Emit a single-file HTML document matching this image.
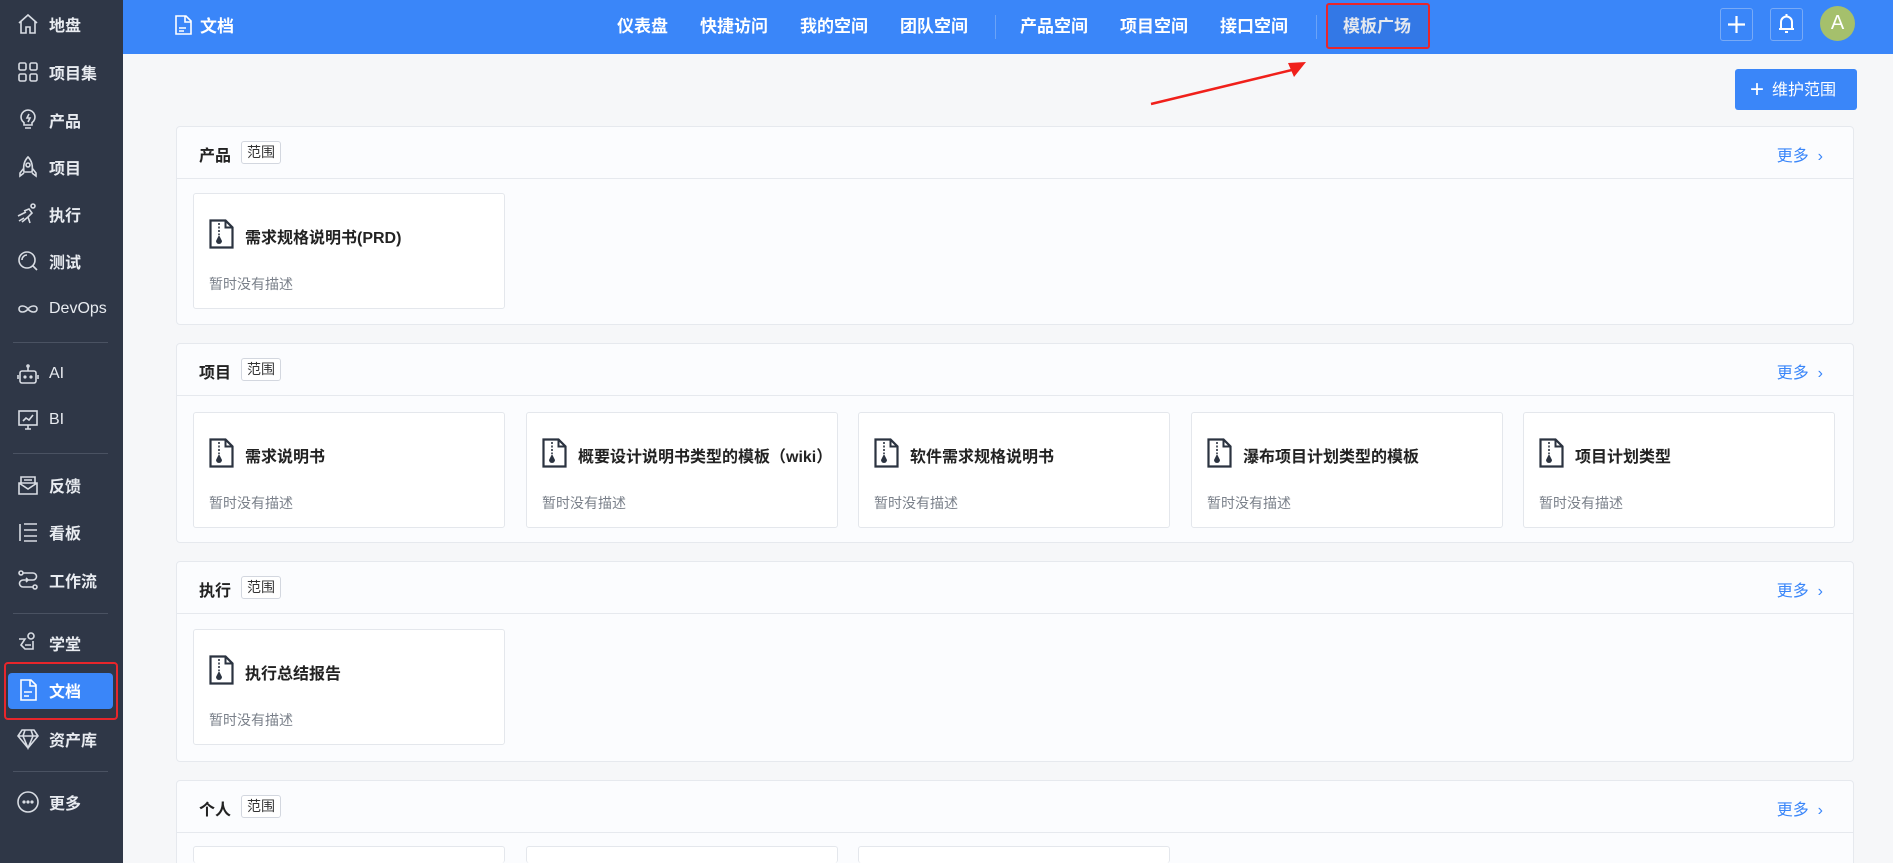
<!DOCTYPE html>
<html><head><meta charset="utf-8"><style>
*{box-sizing:border-box;margin:0;padding:0}
html,body{width:1893px;height:863px;overflow:hidden}
body{background:#f6f7f9;font-family:"Liberation Sans","Noto Sans CJK SC",sans-serif;position:relative}
.side{position:absolute;left:0;top:0;width:123px;height:863px;background:#2f3747}
.si{position:absolute;left:16px;height:30px;display:flex;align-items:center;color:#e8ebf0;font-size:16px;font-weight:bold}
.si svg{width:24px;height:24px;margin-right:9px;stroke:#d8dce3;fill:none;stroke-width:1.6}
.dv{position:absolute;left:13px;width:95px;height:1px;background:#4a5262}
.top{position:absolute;left:123px;top:0;width:1770px;height:54px;background:#3a86f9}
.nav{position:absolute;top:0;height:54px;line-height:54px;color:#fff;font-size:17px;font-weight:bold}
.sec{position:absolute;left:176px;width:1678px;background:#fbfcfe;border:1px solid #e6e9ee;border-radius:4px;overflow:hidden}
.sh{height:52px;border-bottom:1px solid #e6e9ee;position:relative}
.st{position:absolute;left:22px;top:15px;font-size:16px;font-weight:bold;color:#222}
.tag{position:absolute;left:64px;top:14px;border:1px solid #d3d7df;border-radius:3px;font-size:14px;padding:1px 5px;color:#333;background:#fff;line-height:19px}
.more{position:absolute;right:30px;top:15px;color:#3a86f9;font-size:16px}
.card{position:absolute;width:312px;height:116px;background:#fff;border:1px solid #e4e7ec;border-radius:3px}
.card .ic{position:absolute;left:15px;top:25px}
.card .t{position:absolute;left:51px;top:30px;font-size:16px;font-weight:bold;color:#222;white-space:nowrap;width:255px;overflow:hidden}
.card .d{position:absolute;left:15px;top:80px;font-size:14px;color:#7a808a}
</style></head><body>
<div class="side">
<div class="si" style="top:9px"><svg viewBox="0 0 24 24"><path d="M3 11 12 3l9 8M5 9v12h5v-6h4v6h5V9"/></svg>地盘</div>
<div class="si" style="top:57px"><svg viewBox="0 0 24 24"><rect x="3" y="3" width="7" height="7" rx="1.5"/><rect x="14" y="3" width="7" height="7" rx="1.5"/><rect x="3" y="14" width="7" height="7" rx="1.5"/><rect x="14" y="14" width="7" height="7" rx="1.5"/></svg>项目集</div>
<div class="si" style="top:105px"><svg viewBox="0 0 24 24"><path d="M12 2a7 7 0 0 0-4 12.7V17h8v-2.3A7 7 0 0 0 12 2zM9 20h6M13 6l-2 4h3l-2 4"/></svg>产品</div>
<div class="si" style="top:152px"><svg viewBox="0 0 24 24"><path d="M12 2c-4 4-5 9-4 15h8c1-6 0-11-4-15zM8 13l-4 5v3l4-3M16 13l4 5v3l-4-3"/><circle cx="12" cy="10" r="2"/></svg>项目</div>
<div class="si" style="top:199px"><svg viewBox="0 0 24 24"><circle cx="17" cy="4" r="2"/><path d="M8 9l5-2 3 4-4 4 2 6M12 15l-6 5M2 14l8-4M3 19l5-3"/></svg>执行</div>
<div class="si" style="top:246px"><svg viewBox="0 0 24 24"><circle cx="11" cy="11" r="8"/><path d="M17 17l4 4M6 11a5 5 0 0 1 5-5"/></svg>测试</div>
<div class="si" style="top:294px;font-weight:normal"><svg viewBox="0 0 24 24"><path d="M12 12c-3-4-9-4-9 0s6 4 9 0 9-4 9 0-6 4-9 0"/></svg>DevOps</div>
<div class="dv" style="top:342px"></div>
<div class="si" style="top:359px;font-weight:normal"><svg viewBox="0 0 24 24"><rect x="4" y="9" width="16" height="12" rx="2"/><path d="M12 9V5M2 13v4M22 13v4"/><circle cx="12" cy="4" r="1"/><circle cx="9" cy="15" r=".8"/><circle cx="15" cy="15" r=".8"/></svg>AI</div>
<div class="si" style="top:405px;font-weight:normal"><svg viewBox="0 0 24 24"><rect x="3" y="3" width="18" height="14"/><path d="M7 13l3-3 3 2 4-5M9 21h6M12 17v4"/></svg>BI</div>
<div class="dv" style="top:453px"></div>
<div class="si" style="top:470px"><svg viewBox="0 0 24 24"><path d="M5 10V4h14v6M3 10h18v11H3zM3 10l9 6 9-6M8 7h8"/></svg>反馈</div>
<div class="si" style="top:517px"><svg viewBox="0 0 24 24"><path d="M8 4h13M8 10h13M8 16h13M4 4v17M8 21h13"/></svg>看板</div>
<div class="si" style="top:565px"><svg viewBox="0 0 24 24"><circle cx="5" cy="5" r="2"/><circle cx="19" cy="19" r="2"/><path d="M7 5h10a3 3 0 0 1 0 7H7a3 3 0 0 0 0 7h10M10 10l2 2-2 2"/></svg>工作流</div>
<div class="dv" style="top:613px"></div>
<div class="si" style="top:628px"><svg viewBox="0 0 24 24"><circle cx="15" cy="5" r="3"/><path d="M3 8h6l-4 6 4 4h8v-8M9 14h6"/></svg>学堂</div>
<div style="position:absolute;left:8px;top:673px;width:105px;height:36px;background:#3a86f9;border-radius:4px"></div>
<div style="position:absolute;left:4px;top:662px;width:114px;height:58px;border:2px solid #e8262b;border-radius:4px"></div>
<div class="si" style="top:675px;color:#fff"><svg viewBox="0 0 24 24" style="stroke:#fff"><path d="M5 2h10l5 5v15H5zM14 2v6h6M8 14h8M8 18h5"/></svg>文档</div>
<div class="si" style="top:724px"><svg viewBox="0 0 24 24"><path d="M6 3h12l4 6-10 12L2 9zM2 9h20M9 3l-2 6 5 12 5-12-2-6"/></svg>资产库</div>
<div class="dv" style="top:771px"></div>
<div class="si" style="top:787px"><svg viewBox="0 0 24 24"><circle cx="12" cy="12" r="10"/><circle cx="8" cy="12" r=".8" fill="#d8dce3"/><circle cx="12" cy="12" r=".8" fill="#d8dce3"/><circle cx="16" cy="12" r=".8" fill="#d8dce3"/></svg>更多</div>
</div>

<div class="top"></div>
<svg style="position:absolute;left:175px;top:15px" width="17" height="20" viewBox="0 0 17 20" fill="none" stroke="#fff" stroke-width="1.6"><path d="M1 1h10l5 5v13H1zM10 1v6h6M4 13h7M4 16h5"/></svg>
<div class="nav" style="left:200px">文档</div>
<div class="nav" style="left:617px">仪表盘</div>
<div class="nav" style="left:700px">快捷访问</div>
<div class="nav" style="left:800px">我的空间</div>
<div class="nav" style="left:900px">团队空间</div>
<div style="position:absolute;left:995px;top:15px;width:1px;height:24px;background:#6aa3f8"></div>
<div class="nav" style="left:1020px">产品空间</div>
<div class="nav" style="left:1120px">项目空间</div>
<div class="nav" style="left:1220px">接口空间</div>
<div style="position:absolute;left:1316px;top:15px;width:1px;height:24px;background:#6aa3f8"></div>
<div style="position:absolute;left:1326px;top:3px;width:104px;height:46px;background:#3378e6;border:2px solid #e8262b;border-radius:3px"></div>
<div class="nav" style="left:1343px;color:#e5e8ee">模板广场</div>
<div style="position:absolute;left:1720px;top:8px;width:33px;height:33px;border:1px solid #78aaf6;border-radius:3px"></div>
<svg style="position:absolute;left:1727px;top:15px" width="19" height="19"><path d="M9.5 1v17M1 9.5h17" stroke="#fff" stroke-width="2.2"/></svg>
<div style="position:absolute;left:1770px;top:8px;width:33px;height:33px;border:1px solid #78aaf6;border-radius:3px"></div>
<svg style="position:absolute;left:1777px;top:13px" width="19" height="22" fill="none" stroke="#fff" stroke-width="2"><path d="M4 16V9a5.5 5.5 0 0 1 11 0v7h2H2h2M9.5 3V1M8 19h3"/></svg>
<div style="position:absolute;left:1820px;top:6px;width:35px;height:35px;border-radius:50%;background:#a5c06c;color:#fff;font-size:20px;text-align:center;line-height:35px">A</div>

<svg style="position:absolute;left:1140px;top:55px" width="180" height="55"><path d="M11 49L156 14" stroke="#f0201b" stroke-width="2.5"/><path d="M166 7 148 8 154 22z" fill="#f0201b"/></svg>

<div style="position:absolute;left:1735px;top:69px;width:122px;height:41px;background:#3a86f9;border-radius:3px;color:#fff;font-size:16px;line-height:41px;padding-left:15px"><span style="font-size:24px;vertical-align:-2px;margin-right:8px;font-weight:300">+</span>维护范围</div>

<div class="sec" style="top:126px;height:199px"><div class="sh"><span class="st">产品</span><span class="tag">范围</span><span class="more">更多 &nbsp;›</span></div></div>
<div class="sec" style="top:343px;height:200px"><div class="sh"><span class="st">项目</span><span class="tag">范围</span><span class="more">更多 &nbsp;›</span></div></div>
<div class="sec" style="top:561px;height:201px"><div class="sh"><span class="st">执行</span><span class="tag">范围</span><span class="more">更多 &nbsp;›</span></div></div>
<div class="sec" style="top:780px;height:120px"><div class="sh"><span class="st">个人</span><span class="tag">范围</span><span class="more">更多 &nbsp;›</span></div></div>

<svg width="0" height="0" style="position:absolute"><defs><g id="fi"><path d="M1.5 1.5h15l7 7v20h-22z" fill="none" stroke="#2b3340" stroke-width="2.2"/><path d="M16.5 1.5v7h7" fill="none" stroke="#2b3340" stroke-width="2"/><path d="M10 4v12" stroke="#2b3340" stroke-width="1.6" stroke-dasharray="2 1.5"/><path d="M10 16l-3 6a3 3 0 0 0 6 0z" fill="#2b3340"/></g></defs></svg>

<div class="card" style="left:193px;top:193px"><svg class="ic" width="26" height="31"><use href="#fi"/></svg><div class="t">需求规格说明书(PRD)</div><div class="d">暂时没有描述</div></div>

<div class="card" style="left:193px;top:412px"><svg class="ic" width="26" height="31"><use href="#fi"/></svg><div class="t">需求说明书</div><div class="d">暂时没有描述</div></div>
<div class="card" style="left:526px;top:412px"><svg class="ic" width="26" height="31"><use href="#fi"/></svg><div class="t">概要设计说明书类型的模板（wiki）</div><div class="d">暂时没有描述</div></div>
<div class="card" style="left:858px;top:412px"><svg class="ic" width="26" height="31"><use href="#fi"/></svg><div class="t">软件需求规格说明书</div><div class="d">暂时没有描述</div></div>
<div class="card" style="left:1191px;top:412px"><svg class="ic" width="26" height="31"><use href="#fi"/></svg><div class="t">瀑布项目计划类型的模板</div><div class="d">暂时没有描述</div></div>
<div class="card" style="left:1523px;top:412px"><svg class="ic" width="26" height="31"><use href="#fi"/></svg><div class="t">项目计划类型</div><div class="d">暂时没有描述</div></div>

<div class="card" style="left:193px;top:629px"><svg class="ic" width="26" height="31"><use href="#fi"/></svg><div class="t">执行总结报告</div><div class="d">暂时没有描述</div></div>

<div class="card" style="left:193px;top:846px;height:17px;border-bottom:none"></div>
<div class="card" style="left:526px;top:846px;height:17px;border-bottom:none"></div>
<div class="card" style="left:858px;top:846px;height:17px;border-bottom:none"></div>
</body></html>
